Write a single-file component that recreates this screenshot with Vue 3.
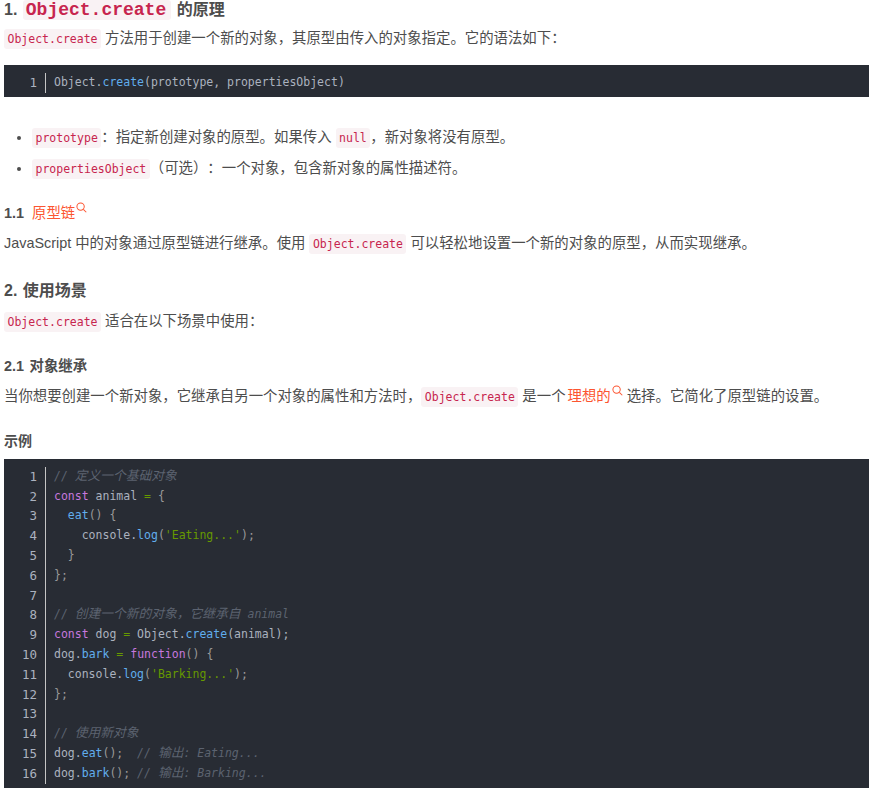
<script setup>
const first = [[['', 'Object.'], ['fn', 'create'], ['', '(prototype, propertiesObject)']]]
const example = [
  [['cm', '// '], ['cz', '定义一个基础对象']],
  [['kw', 'const'], ['', ' animal '], ['op', '='], ['pn', ' {']],
  [['', '  '], ['fn', 'eat'], ['pn', '() {']],
  [['', '    console.'], ['fn', 'log'], ['pn', '('], ['st', "'Eating...'"], ['pn', ');']],
  [['pn', '  }']],
  [['pn', '};']],
  [],
  [['cm', '// '], ['cz', '创建一个新的对象，它继承自'], ['cm', ' animal']],
  [['kw', 'const'], ['', ' dog '], ['op', '='], ['', ' Object.'], ['fn', 'create'], ['', '(animal);']],
  [['', 'dog.'], ['fn', 'bark'], ['', ' '], ['op', '='], ['', ' '], ['kw', 'function'], ['pn', '() {']],
  [['', '  console.'], ['fn', 'log'], ['pn', '('], ['st', "'Barking...'"], ['pn', ');']],
  [['pn', '};']],
  [],
  [['cm', '// '], ['cz', '使用新对象']],
  [['', 'dog.'], ['fn', 'eat'], ['pn', '();  '], ['cm', '// '], ['cz', '输出'], ['cm', ': Eating...']],
  [['', 'dog.'], ['fn', 'bark'], ['pn', '(); '], ['cm', '// '], ['cz', '输出'], ['cm', ': Barking...']]
]
const blocks = { first, example }
</script>

<template>
  <article class="doc">
    <h3 class="h-top">1. <code>Object.create</code> 的原理</h3>
    <p class="intro"><code>Object.create</code> 方法用于创建一个新的对象，其原型由传入的对象指定。它的语法如下：</p>

    <div class="block first">
      <div v-for="(line, i) in blocks.first" :key="i" class="line">
        <span class="num">{{ i + 1 }}</span>
        <span class="src"><span v-for="(t, j) in line" :key="j" :class="t[0]">{{ t[1] }}</span></span>
      </div>
    </div>

    <ul class="list">
      <li><code>prototype</code>：指定新创建对象的原型。如果传入 <code>null</code>，新对象将没有原型。</li>
      <li><code>propertiesObject</code>（可选）：一个对象，包含新对象的属性描述符。</li>
    </ul>

    <h4 class="h-11">1.1 <a class="link l-a">原型链<svg class="mag" viewBox="0 0 12 12" width="11" height="11"><circle cx="5" cy="5" r="4" fill="none" stroke="currentColor" stroke-width="1.1" /><path d="M8 8l3.2 3.2" fill="none" stroke="currentColor" stroke-width="1.1" /></svg></a></h4>
    <p class="p-11">JavaScript 中的对象通过原型链进行继承。使用 <code>Object.create</code> 可以轻松地设置一个新的对象的原型，从而实现继承。</p>

    <h3 class="h-2">2. 使用场景</h3>
    <p class="p-2"><code>Object.create</code> 适合在以下场景中使用：</p>

    <h4 class="h-21">2.1 对象继承</h4>
    <p class="p-21">当你想要创建一个新对象，它继承自另一个对象的属性和方法时，<code>Object.create</code> 是一个<a class="link l-b">理想的<svg class="mag" viewBox="0 0 12 12" width="11" height="11"><circle cx="5" cy="5" r="4" fill="none" stroke="currentColor" stroke-width="1.1" /><path d="M8 8l3.2 3.2" fill="none" stroke="currentColor" stroke-width="1.1" /></svg></a>选择。它简化了原型链的设置。</p>

    <h5 class="h-ex">示例</h5>
    <div class="block">
      <div v-for="(line, i) in blocks.example" :key="i" class="line">
        <span class="num">{{ i + 1 }}</span>
        <span class="src"><span v-for="(t, j) in line" :key="j" :class="t[0]">{{ t[1] }}</span></span>
      </div>
    </div>
  </article>
</template>

<style scoped>
.doc {
  width: 865px;
  margin-left: 4px;
  font-family: "Liberation Sans", "Noto Sans CJK SC", sans-serif;
  font-size: 14.4px;
  text-spacing-trim: space-all;
  color: #4d4d4d;
}
p, h3, h4, h5, ul { margin: 0; }
p { line-height: 24px; }
code {
  font-family: "DejaVu Sans Mono", "Noto Sans CJK SC", monospace;
  font-size: 11.5px;
  line-height: 1;
  font-weight: 400;
  color: #c7254e;
  background: #f9f2f4;
  padding: 3px 3.5px;
  border-radius: 3px;
}
h3 { font-size: 16px; line-height: 24px; font-weight: 700; word-spacing: 1px; }
.h-top { line-height: 20px; }
.h-top code {
  display: inline-block;
  height: 20px;
  line-height: 20px;
  font-family: "Liberation Mono", monospace;
  font-size: 18px;
  font-weight: 700;
  padding: 0 5px 0 3px;
}
.intro { margin-top: 6px; }
.block {
  background: #282c34;
  padding: 8px 0 4px;
  font-family: "DejaVu Sans Mono", "Noto Sans CJK SC", monospace;
  font-size: 11.5px;
  line-height: 19.8px;
  color: #abb2bf;
}
.first { margin-top: 15px; }
.line { display: flex; white-space: pre; height: 19.8px; }
.num {
  width: 33px;
  text-align: right;
  padding-right: 8px;
  margin-right: 9px;
  color: #abb2bf;
  font-size: 12.5px;
  flex: none;
  box-shadow: 1px 0 0 #c5c5c5;
}
.fn { color: #61aeee; }
.kw { color: #c678dd; }
.st { color: #669900; }
.op { color: #669900; }
.pn { color: #999999; }
.cm { color: #5c6370; font-style: italic; }
.cz { color: #5c6370; font-style: italic; font-size: 12.75px; line-height: 1; }
.list { margin-top: 28px; padding-left: 28px; }
.list li { line-height: 24px; margin-bottom: 7px; }
h4 { font-size: 14.4px; line-height: 24px; font-weight: 700; }
.h-11 { margin-top: 21px; }
.link { color: #fc5531; font-weight: 400; }
.l-a { margin-left: 4px; }
.l-b { margin-left: 2px; margin-right: 4px; }
.mag { vertical-align: 5px; margin-left: 1px; }
.p-11 { margin-top: 6px; }
.h-2 { margin-top: 24px; }
.p-2 { margin-top: 6px; }
.h-21 { margin-top: 21px; word-spacing: 1.5px; }
.p-21 { margin-top: 6px; }
.h-ex { font-size: 14px; line-height: 20px; font-weight: 700; margin-top: 23px; }
.h-ex + .block { margin-top: 8px; }
</style>
